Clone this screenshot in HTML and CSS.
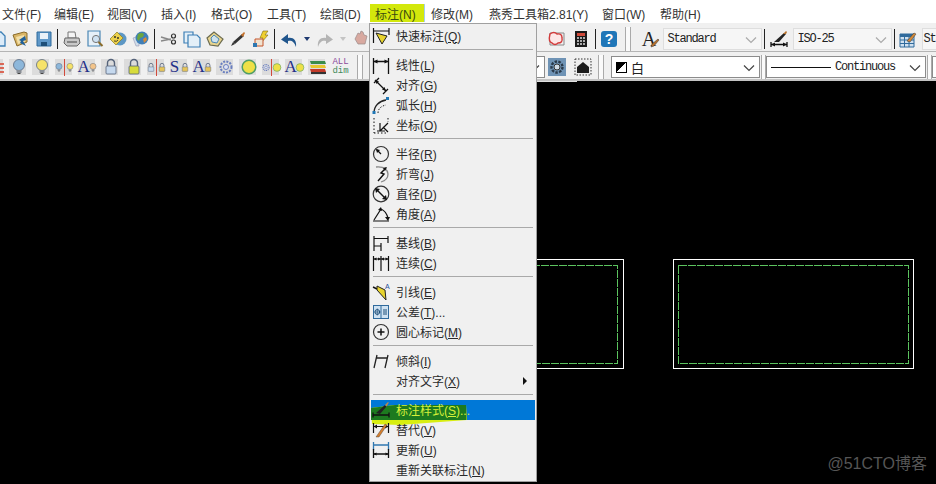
FILE: index.html
```html
<!DOCTYPE html>
<html lang="zh-CN">
<head>
<meta charset="utf-8">
<title>标注菜单</title>
<link rel="stylesheet" href="styles.css">
</head>
<body>
<svg class="defs" aria-hidden="true">
  <symbol id="chev" viewBox="0 0 12 8"><path d="M1 1.5 6 6.5 11 1.5" fill="none" stroke="currentColor" stroke-width="1.2"/></symbol>
  <symbol id="bulb" viewBox="0 0 18 18"><circle cx="9" cy="7" r="5.5" fill="currentColor" stroke="#5a6a80" stroke-width=".8"/><path d="M6.5 12h5v3h-5z" fill="#8a8f96"/><path d="M7.5 15.5h3" stroke="#444"/></symbol>
  <symbol id="lock" viewBox="0 0 18 18"><path d="M5.5 8V5a3.5 3.5 0 0 1 7 0v3" fill="none" stroke="#55637a" stroke-width="1.4"/><rect x="4" y="8" width="10" height="8" rx="1" fill="currentColor" stroke="#55637a" stroke-width=".8"/></symbol>
  <symbol id="gear" viewBox="0 0 18 18"><circle cx="9" cy="9" r="5.5" fill="none" stroke="#6a7fc0" stroke-width="2" stroke-dasharray="2 1.2"/><circle cx="9" cy="9" r="2.5" fill="#dfe3f3" stroke="#6a7fc0"/></symbol>
  <symbol id="dim" viewBox="0 0 20 20"><path d="M2.5 3v16M17.5 3v16M2.5 6.5h15" fill="none" stroke="#111" stroke-width="1.3"/><path d="M2.5 6.5l4-2v4zM17.5 6.5l-4-2v4z" fill="#111"/></symbol>
</svg>

<nav class="menubar">
  <span class="mitem first w52">文件(F)</span>
  <span class="mitem w53">编辑(E)</span>
  <span class="mitem w54">视图(V)</span>
  <span class="mitem w50">插入(I)</span>
  <span class="mitem w56">格式(O)</span>
  <span class="mitem w53">工具(T)</span>
  <span class="mitem w56">绘图(D)</span>
  <span class="mitem open">标注(N)</span>
  <span class="mitem w58">修改(M)</span>
  <span class="mitem w113">燕秀工具箱2.81(Y)</span>
  <span class="mitem w58">窗口(W)</span>
  <span class="mitem w58">帮助(H)</span>
</nav>

<div class="toolbar row1">
  <span class="tool"><svg class="ic" viewBox="0 0 18 18"><path d="M3 2h9l4 4v10H3z" fill="#dcebf8" stroke="#3d7fb5" stroke-width="1.3"/></svg></span>
  <span class="tool"><svg class="ic" viewBox="0 0 18 18"><path d="M1 5l11-3 3 1v9L5 16z" fill="#d9b566" stroke="#8a6b2a"/><path d="M4 7l8-2 1 7-7 2z" fill="#f2dfa8"/><path d="M13 6 7 10l2 1-1 2 6 3-3-5 3-1z" fill="#1f5f99"/></svg></span>
  <span class="tool"><svg class="ic" viewBox="0 0 18 18"><path d="M2 2h14v14H2z" fill="#5f98c9" stroke="#2f6a9c"/><path d="M5 3h8v6H5z" fill="#e9f1f8"/><path d="M6 12h6v4H6z" fill="#1f4f78"/></svg></span>
  <span class="sep"></span>
  <span class="tool"><svg class="ic" viewBox="0 0 18 18"><path d="M5 2h7l1 6H5z" fill="#f5f5f5" stroke="#777"/><path d="M2 8h14l1 5-3 3H4l-3-3z" fill="#c8c8c8" stroke="#666"/><path d="M4 12h10" stroke="#444"/></svg></span>
  <span class="tool"><svg class="ic" viewBox="0 0 18 18"><path d="M2 1h12v15H2z" fill="#e6f0f8" stroke="#4b87b5" stroke-width="1.2"/><circle cx="10" cy="9" r="3.6" fill="#cfe2f2" stroke="#777"/><path d="M12.5 12l4 4" stroke="#8a6b2a" stroke-width="2"/></svg></span>
  <span class="tool"><svg class="ic" viewBox="0 0 18 18"><circle cx="11" cy="9" r="6.5" fill="#5d97c4"/><path d="M1 9l7-7 6 6-7 7z" fill="#ecd049" stroke="#8a7a20" stroke-width=".7"/><circle cx="6" cy="7" r=".9" fill="#222"/><circle cx="9" cy="8" r=".9" fill="#222"/><path d="M5 11q3 1 4-1" fill="none" stroke="#222" stroke-width=".8"/></svg></span>
  <span class="tool"><svg class="ic" viewBox="0 0 18 18"><path d="M1 8l6-2v10l-3 0z" fill="#cfdde9" stroke="#88a"  stroke-width=".5"/><circle cx="10" cy="8" r="6.5" fill="#3f7fb8"/><path d="M6 4q4-2 6 0l-1 3-3 1-1 3-2-2z" fill="#6ba53f"/><path d="M11 9l3-2 1 3-3 3z" fill="#d58a38"/></svg></span>
  <span class="sep"></span>
  <span class="tool"><svg class="ic" viewBox="0 0 18 18"><path d="M1 7l10 3M1 11l10-2" stroke="#888" stroke-width="1.4"/><circle cx="13.5" cy="6" r="2" fill="none" stroke="#333" stroke-width="1.2"/><circle cx="13.5" cy="12" r="2" fill="none" stroke="#333" stroke-width="1.2"/></svg></span>
  <span class="tool"><svg class="ic" viewBox="0 0 18 18"><path d="M1 2h9v11H1z" fill="#e3eff8" stroke="#3d7fb5" stroke-width="1.2"/><path d="M5 5h9l3 3v9H5z" fill="#e3eff8" stroke="#3d7fb5" stroke-width="1.2"/></svg></span>
  <span class="tool"><svg class="ic" viewBox="0 0 18 18"><path d="M1 8l7-6 9 7-5 7-8-1z" fill="#e8d48e" stroke="#6b6b50" stroke-width="1.2"/><path d="M5 8l3-3 5 4-2 4-5-1z" fill="#cfe3ee" stroke="#4b87b5"/></svg></span>
  <span class="tool"><svg class="ic" viewBox="0 0 18 18"><path d="M2 16l2-4 2 2z" fill="#333"/><path d="M4 12 13 4l2 2-9 8z" fill="#333"/><path d="M12 5l3-3 1 1-2 4z" fill="#c5722d"/></svg></span>
  <span class="tool"><svg class="ic" viewBox="0 0 18 18"><path d="M11 1l-3 7h3l-2 5 7-8h-3l3-4z" fill="#efcf2f" stroke="#7c6a10" stroke-width=".6"/><path d="M3 9h8v7H3z" fill="#f0e2d0" stroke="#c4552a"/><path d="M1 13h4v4H1z" fill="#2e77b0"/></svg></span>
  <span class="sep"></span>
  <span class="tool wide"><svg class="ic" viewBox="0 0 18 18"><path d="M16 17c1-7-3-10-8-9V4L1 9.500 8 14v-3c3-1 6 0 8 6z" fill="#20558c"/></svg></span>
  <span class="drop"><svg class="tri" viewBox="0 0 6 4"><path d="M0 0h6L3 4z" fill="#1f3a70"/></svg></span>
  <span class="tool wide"><svg class="ic" viewBox="0 0 18 18"><path d="M2 17C1 10 5 7 10 8V4l7 5.500L10 14v-3C7 10 4 11 2 17z" fill="#b4b4b4"/></svg></span>
  <span class="drop"><svg class="tri" viewBox="0 0 6 4"><path d="M0 0h6L3 4z" fill="#c4c4c4"/></svg></span>
  <span class="tool"><svg class="ic" viewBox="0 0 18 18"><path d="M3 9l3-6 2 1 1-3 2 1 1 3 3 1-2 8H6z" fill="#d8a9a0" stroke="#9a8a88" stroke-width=".7"/></svg></span>
  <span class="gap-a"></span>
  <span class="tool cloud"><svg class="ic" viewBox="0 0 18 18"><path d="M3 3h14v12H3z" fill="none" stroke="#888"/><path d="M3 4q4-3 7 0 5-1 5 4 1 5-4 5-3 3-6 0-4-1-2-9z" fill="#fde6e6" stroke="#d23a3a" stroke-width="1.400"/></svg></span>
  <span class="tool wide"><svg class="ic" viewBox="0 0 18 18"><path d="M3 1h12v16H3z" fill="#1b1b1b"/><path d="M5 3h8v3H5z" fill="#cf4a3a"/><path d="M5 8h8M5 11h8M5 14h8" stroke="#ddd" stroke-width="1.500" stroke-dasharray="2 1"/></svg></span>
  <span class="sep"></span>
  <span class="tool"><span class="help">?</span></span>
  <span class="grip"></span>
  <span class="tool"><span class="pen-a">A</span><svg class="pen" viewBox="0 0 10 10"><path d="M1 9l1-3 6-5 1 1-5 6z" fill="#b5702c" stroke="#333" stroke-width=".5"/></svg></span>
  <span class="combo soft c1"><span class="ctext">Standard</span><svg class="chev"><use href="#chev"/></svg></span>
  <span class="sep"></span>
  <span class="tool wide"><svg class="ic" viewBox="0 0 18 18"><path d="M1 12v5M17 12v5M1 14.500h16" stroke="#111" stroke-width="1.300"/><path d="M1 14.500l4-2v4zM17 14.500l-4-2v4z" fill="#111"/><path d="M4 12 14 3l2 1-7 8z" fill="#222"/><path d="M13 4l3-3 1 1-1 2z" fill="#b5702c"/></svg></span>
  <span class="combo soft c1"><span class="ctext">ISO-25</span><svg class="chev"><use href="#chev"/></svg></span>
  <span class="sep"></span>
  <span class="tool"><svg class="ic" viewBox="0 0 18 18"><path d="M1 4h14v13H1z" fill="#cfe0ef" stroke="#2f6a9c"/><path d="M1 4h14v3H1z" fill="#2f6a9c"/><path d="M1 10h14M1 13.500h14M5.500 7v10M10 7v10" stroke="#2f6a9c"/><path d="M8 11 15 3l2 1-6 8z" fill="#d58a38" stroke="#333" stroke-width=".5"/></svg></span>
  <span class="combo soft c6"><span class="ctext">St</span></span>
</div>

<div class="toolbar row2">
  <span class="tool tile"><svg class="ic" viewBox="0 0 18 18"><path d="M9 3v12M12 6h5M12 10h5M12 14h5" stroke="#d8402a" stroke-width="1.400"/></svg></span>
  <span class="tool tile"><svg class="ic blue"><use href="#bulb"/></svg></span>
  <span class="tool tile"><svg class="ic yellow"><use href="#bulb"/></svg></span>
  <span class="tool tile"><svg class="half blue" viewBox="0 0 18 18"><use href="#bulb"/></svg><i class="redbar"></i><svg class="half yellow" viewBox="0 0 18 18"><use href="#bulb"/></svg></span>
  <span class="tool tile"><span class="big-a">A</span><svg class="half peach" viewBox="0 0 18 18"><use href="#bulb"/></svg></span>
  <span class="tool tile"><svg class="ic ltblue"><use href="#lock"/></svg></span>
  <span class="tool tile"><svg class="ic lime"><use href="#lock"/></svg></span>
  <span class="tool tile"><svg class="half ltblue" viewBox="0 0 18 18"><use href="#lock"/></svg><i class="redbar"></i><svg class="half gold" viewBox="0 0 18 18"><use href="#lock"/></svg></span>
  <span class="tool tile"><span class="big-a">S</span><svg class="half gold" viewBox="0 0 18 18"><use href="#lock"/></svg></span>
  <span class="tool tile"><span class="big-a">A</span><svg class="half gold" viewBox="0 0 18 18"><use href="#lock"/></svg></span>
  <span class="tool tile"><svg class="ic"><use href="#gear"/></svg></span>
  <span class="tool tile"><svg class="ic" viewBox="0 0 18 18"><circle cx="9" cy="9" r="6.800" fill="#eee046" stroke="#4f9e66" stroke-width="1.500"/></svg></span>
  <span class="tool tile"><svg class="half" viewBox="0 0 18 18"><use href="#gear"/></svg><i class="redbar"></i><svg class="half" viewBox="0 0 18 18"><circle cx="9" cy="9" r="7" fill="#eee046" stroke="#4f9e66"/></svg></span>
  <span class="tool tile"><span class="big-a">A</span><svg class="half" viewBox="0 0 18 18"><circle cx="9" cy="9" r="7" fill="#eee046" stroke="#4f9e66"/></svg></span>
  <span class="tool tile"><svg class="ic" viewBox="0 0 18 18"><path d="M1 3h15l1 3H2z" fill="#3b8c4a"/><path d="M1 7h15l1 3H2z" fill="#e8c72e"/><path d="M1 11h15l1 3H2z" fill="#c23a2a"/><path d="M2 14h15v2H2z" fill="#333"/></svg></span>
  <span class="tool tile plain"><span class="alldim"><b>ALL</b><em>dim</em></span></span>
  <span class="grip g2"></span>
  <span class="gap-b"></span>
  <span class="combo strong c2"><svg class="chev"><use href="#chev"/></svg></span>
  <span class="tool t-a"><svg class="ic" viewBox="0 0 18 18"><rect width="18" height="18" fill="#6f93b5"/><circle cx="9" cy="9" r="5.500" fill="none" stroke="#2a3a4a" stroke-width="2.400" stroke-dasharray="2.500 1.300"/><circle cx="9" cy="9" r="3" fill="#cfdbe6" stroke="#333"/></svg></span>
  <span class="tool t-b"><svg class="ic" viewBox="0 0 18 18"><rect x="1" y="1" width="16" height="16" fill="#eee" stroke="#333" stroke-dasharray="1.500 1.500"/><path d="M3 9l6-5 6 5v6H3z" fill="#1c1c1c"/></svg></span>
  <span class="grip g3"></span>
  <span class="combo strong c3"><i class="swatch"></i><span class="cjk">白</span><svg class="chev"><use href="#chev"/></svg></span>
  <span class="grip g4"></span>
  <span class="combo strong c4"><i class="ltline"></i><span class="ctext">Continuous</span><svg class="chev"><use href="#chev"/></svg></span>
  <span class="grip g4"></span>
  <span class="combo strong c5"></span>
</div>

<main class="canvas">
  <svg class="drawing" viewBox="0 81 936 403">
    <rect class="outer" x="373.500" y="259.500" width="250" height="109"/>
    <rect class="inner" x="378.500" y="265.500" width="239" height="98"/>
    <rect class="outer" x="673.500" y="259.500" width="240" height="109"/>
    <rect class="inner" x="678.500" y="265.500" width="230" height="98"/>
  </svg>
  <i class="topline"></i>
  <span class="watermark">@51CTO博客</span>
</main>

<div class="menu">
  <div class="row"><svg class="mi" viewBox="0 0 20 20"><path d="M2.500 2v15M18 2v7M2.500 5h15.500" fill="none" stroke="#111" stroke-width="1.200"/><path d="M5 7l11 3-5 8z" fill="#e8d42e" stroke="#222"/></svg><span>快速标注(<u>Q</u>)</span></div>
  <div class="divider"></div>
  <div class="row"><svg class="mi"><use href="#dim"/></svg><span>线性(<u>L</u>)</span></div>
  <div class="row"><svg class="mi" viewBox="0 0 20 20"><path d="M3 8l5-5M12 19l5-5M4 5l11 11" fill="none" stroke="#111" stroke-width="1.300"/><path d="M4 5l4 1.500L5.500 9zM15 16l-4-1.500 2.500-2.500z" fill="#111"/></svg><span>对齐(<u>G</u>)</span></div>
  <div class="row"><svg class="mi" viewBox="0 0 20 20"><path d="M3 18c0-7 5-12 12-13" fill="none" stroke="#222" stroke-width="1.300"/><path d="M7 18c0-4 3-7 8-8" fill="none" stroke="#222" stroke-dasharray="1.500 1.500"/><rect x="15" y="2" width="3" height="3" fill="#1f77b5"/><rect x="1.500" y="16" width="3" height="3" fill="#1f77b5"/></svg><span>弧长(<u>H</u>)</span></div>
  <div class="row"><svg class="mi" viewBox="0 0 20 20"><path d="M3 3v15M17 3v4M3 18h14" fill="none" stroke="#111" stroke-dasharray="1.500 2"/><path d="M9 8v8M9 16l8-8M6 16h8M12 12l5 5" fill="none" stroke="#111" stroke-width="1.200"/></svg><span>坐标(<u>O</u>)</span></div>
  <div class="divider"></div>
  <div class="row"><svg class="mi" viewBox="0 0 20 20"><circle cx="10" cy="10" r="7.500" fill="none" stroke="#333" stroke-width="1.200"/><path d="M10 10 5.500 5.500" stroke="#111" stroke-width="1.300"/><path d="M5 5l4 1-3 3z" fill="#111"/></svg><span>半径(<u>R</u>)</span></div>
  <div class="row"><svg class="mi" viewBox="0 0 20 20"><path d="M5 3q11-1 12 7 0 6-7 8" fill="none" stroke="#888" stroke-width="1.300"/><path d="M15 4l-5 5 3 1-6 7" fill="none" stroke="#111" stroke-width="1.400"/><path d="M16 3l-4 1 2 3z" fill="#111"/></svg><span>折弯(<u>J</u>)</span></div>
  <div class="row"><svg class="mi" viewBox="0 0 20 20"><circle cx="10" cy="10" r="7.800" fill="none" stroke="#333" stroke-width="1.200"/><path d="M5 5l10 10" stroke="#111" stroke-width="1.400"/><path d="M4 4l5 1-4 4zM16 16l-5-1 4-4z" fill="#111"/></svg><span>直径(<u>D</u>)</span></div>
  <div class="row"><svg class="mi" viewBox="0 0 20 20"><path d="M2 17h16M3 16 10 5q5 2 7 9" fill="none" stroke="#111" stroke-width="1.200"/><path d="M17 17l-3-4h5z" fill="#111"/><path d="M10 3l-3 3 4 1z" fill="#111"/></svg><span>角度(<u>A</u>)</span></div>
  <div class="divider"></div>
  <div class="row"><svg class="mi" viewBox="0 0 20 20"><path d="M3 3v15M10 10v8M17 3v7M3 5.500h14M3 13h7" fill="none" stroke="#111" stroke-width="1.200"/></svg><span>基线(<u>B</u>)</span></div>
  <div class="row"><svg class="mi" viewBox="0 0 20 20"><path d="M2.500 3v15M10 3v15M17.500 3v15M2.500 6h15" fill="none" stroke="#111" stroke-width="1.200"/><path d="M2.500 6l3-1.500v3zM10 6l-3-1.500v3zM10 6l3-1.500v3zM17.500 6l-3-1.500v3z" fill="#111"/></svg><span>连续(<u>C</u>)</span></div>
  <div class="divider"></div>
  <div class="row"><svg class="mi" viewBox="0 0 20 20"><path d="M2 5l4 2" stroke="#111" stroke-width="1.500"/><path d="M6 4l8 4 1 10-9-10z" fill="#e8d42e" stroke="#222"/><text class="mini-a" x="14" y="7">A</text></svg><span>引线(<u>E</u>)</span></div>
  <div class="row"><svg class="mi" viewBox="0 0 20 20"><rect x="2.500" y="3.500" width="15" height="13" fill="#cfe2f2" stroke="#2f6a9c"/><path d="M10 3.500v13" stroke="#2f6a9c"/><circle cx="6.300" cy="10" r="2.400" fill="none" stroke="#1c4e78"/><path d="M6.300 6.500v7M3.500 10h6" stroke="#1c4e78" stroke-width=".7"/><path d="M13 7v6M15 7v6" stroke="#1c4e78"/></svg><span>公差(<u>T</u>)...</span></div>
  <div class="row"><svg class="mi" viewBox="0 0 20 20"><circle cx="10" cy="10" r="7.500" fill="none" stroke="#333" stroke-width="1.200"/><path d="M10 6.500v7M6.500 10h7" stroke="#111" stroke-width="1.500"/></svg><span>圆心标记(<u>M</u>)</span></div>
  <div class="divider"></div>
  <div class="row"><svg class="mi" viewBox="0 0 20 20"><path d="M6 4 3 17M17 4l-3 13M5 7h11" fill="none" stroke="#222" stroke-width="1.300"/></svg><span>倾斜(<u>I</u>)</span></div>
  <div class="row"><span class="mi-blank"></span><span>对齐文字(<u>X</u>)</span><i class="arrow"></i></div>
  <div class="divider"></div>
  <div class="row current">
    <svg class="marker" viewBox="0 0 164 25"><path d="M0 6 24 3h71l1 15-27 2-40 3-28-1z" fill="#d8ee10"/><path d="M0 6 24 3h71l.5 15H0z" fill="#1d7a1f"/></svg>
    <svg class="mi over" viewBox="0 0 20 20"><path d="M2 15h16M2 12.500v5M18 12.500v5" stroke="#111" stroke-width="1.300"/><path d="M5 13 14 5l1.500 1.500L9 14z" fill="#222"/><path d="M14 5l3-3 .8.800-2.300 3.700z" fill="#c08a4a"/></svg>
    <span class="over">标注样式(<u>S</u>)...</span>
  </div>
  <div class="row"><svg class="mi" viewBox="0 0 20 20"><path d="M2.500 3v10M17.500 3v10M2.500 6.500h15" fill="none" stroke="#111" stroke-width="1.200"/><path d="M2.500 6.500l3.500-2v4zM17.500 6.500l-3.500-2v4z" fill="#111"/><path d="M5 17 14 4l2 1-8 12z" fill="#d7802e" stroke="#333" stroke-width=".4"/></svg><span>替代(<u>V</u>)</span></div>
  <div class="row"><svg class="mi" viewBox="0 0 20 20"><path d="M2.500 2v8M17.500 2v8M2.500 5h15" fill="none" stroke="#2f77b0" stroke-width="1.300"/><path d="M2.500 9v9M17.500 9v9M2.500 14h15" fill="none" stroke="#111" stroke-width="1.300"/><path d="M2.500 14l3-1.500v3zM17.500 14l-3-1.500v3z" fill="#111"/></svg><span>更新(<u>U</u>)</span></div>
  <div class="row"><span class="mi-blank"></span><span>重新关联标注(<u>N</u>)</span></div>
</div>
</body>
</html>
```
FILE: styles.css
```css
* { box-sizing: border-box; }
html, body { margin: 0; height: 100%; }
body {
  width: 936px; height: 484px; overflow: hidden; position: relative;
  display: flex; flex-direction: column; background: #000;
  font: 12px "Liberation Sans", "Noto Sans CJK SC", sans-serif; color: #333;
}
.defs { position: absolute; width: 0; height: 0; }

/* menu bar */
.menubar { flex: none; height: 23px; padding-top: 4px; background: #fff; display: flex; white-space: nowrap; }
.mitem { flex: none; height: 18px; padding-left: 6px; display: flex; align-items: center; }
.mitem.first { margin-left: -4px; }
.w50 { width: 50px; }
.w52 { width: 52px; }
.w53 { width: 53px; }
.w54 { width: 54px; }
.w56 { width: 56px; }
.w58 { width: 58px; }
.w113 { width: 113px; }
.mitem.open { width: 55px; padding-left: 5px; background: #d3e80c; border-right: 1px solid #a5cdf0; color: #3a4a10; }

/* toolbars */
.toolbar { flex: none; display: flex; align-items: center; background: #f0f0f0; white-space: nowrap; overflow: hidden; }
.row1 { height: 29px; padding-top: 4px; border-bottom: 1px solid #b4b4b4; }
.row2 { height: 29px; padding-top: 3px; border-bottom: 2px solid #c4c4c4; }
.tool { flex: none; width: 23px; height: 24px; display: flex; align-items: center; justify-content: center; position: relative; }
.row1 .tool:first-child { margin-left: -14px; }
.row2 .tool:first-child { margin-left: -16px; }
.tool.wide { width: 24px; }
.tool.cloud { width: 26px; }
.ic { width: 18px; height: 18px; display: block; }
.sep { flex: none; width: 1px; height: 20px; margin: 0 2px; background: #222; }
.drop { flex: none; width: 12px; display: flex; justify-content: center; }
.tri { width: 6px; height: 4px; }
.gap-a { flex: none; width: 170.500px; }
.gap-b { flex: none; width: 170px; }
.grip { flex: none; width: 6px; height: 24px; margin: 0 7px 0 4px; border-left: 1px solid #aaa; border-right: 1px solid #aaa; background: #fafafa; }
.g2 { margin: 0 0 0 5px; }
.g3 { margin: 0 7px 0 4px; }
.g4 { margin: 0 0 0 1px; width: 5px; }

.tile::before { content: ""; position: absolute; left: 2px; right: 4px; top: 4px; bottom: 4px; background: #dcdcdc; }
.tile.plain::before { display: none; }
.tile > * { position: relative; }
.half { width: 10px; height: 15px; display: block; }
.blue { color: #8db7da; }
.yellow { color: #f6e26a; }
.peach { color: #f3c48a; }
.ltblue { color: #c6d9ee; }
.lime { color: #d7dc3c; }
.gold { color: #e6c45a; }
.redbar { width: 1px; height: 17px; background: #d24a3c; flex: none; }
.big-a { font: 17px/18px "Liberation Serif", serif; color: #1f2f88; width: 10px; text-align: center; }
.alldim { display: flex; flex-direction: column; font: 9px/9px "Liberation Mono", monospace; text-align: center; }
.alldim b { font-weight: 400; color: #8a4a9a; }
.alldim em { font-style: normal; color: #3f8a5a; }

.help { width: 16px; height: 16px; border-radius: 3px; background: #1f76b8; color: #fff; font: 700 14px/16px "Liberation Sans", sans-serif; text-align: center; }
.pen-a { font: 20px/20px "Liberation Serif", serif; color: #222; }
.pen { position: absolute; right: 1px; bottom: 3px; width: 10px; height: 10px; }

.combo { flex: none; height: 22px; display: flex; align-items: center; padding: 0 4px; background: #fff; position: relative; }
.soft { background: #f6f6f6; border: 1px solid #dedede; }
.strong { border: 1px solid #8c8c8c; height: 22px; }
.ctext { font: 12px "Liberation Mono", monospace; letter-spacing: -1.200px; color: #222; }
.chev { width: 12px; height: 8px; position: absolute; right: 4px; top: 7px; color: #444; }
.soft .chev { color: #aaa; }
.c1 { width: 99px; margin-left: 2px; }
.c2 { width: 12px; border-left: 0; }
.c3 { width: 149px; }
.c4 { width: 160px; }
.c5 { width: 20px; }
.c6 { width: 14px; margin-left: 2px; border-right: 0; padding: 0 0 0 1px; }
.t-b { margin-left: 3px; }
.swatch { width: 11px; height: 11px; border: 1px solid #000; background: linear-gradient(45deg, #fff 50%, #000 50%); margin-right: 4px; transform: scaleX(-1); }
.cjk { font: 13px "Noto Sans CJK SC", sans-serif; color: #222; }
.ltline { width: 60px; height: 1px; background: #111; margin-right: 4px; }

/* canvas */
.canvas { flex: 1; position: relative; background: #000; }
.drawing { position: absolute; left: 0; top: 0; width: 936px; height: 403px; }
.outer { fill: none; stroke: #fff; stroke-width: 1; }
.inner { fill: none; stroke: #5cc45f; stroke-width: 1.300; stroke-dasharray: 8 1; shape-rendering: crispEdges; }
.topline { position: absolute; left: 537px; top: 0; width: 40px; height: 1px; background: #e0e0e0; }
.watermark { position: absolute; right: 9px; bottom: 10px; font: 16px "Liberation Sans", "Noto Sans CJK SC", sans-serif; color: #565656; }

/* dropdown */
.menu {
  position: absolute; left: 369px; top: 23px; width: 168px; height: 459px;
  background: #f0f0f0; border: 1px solid #a0a0a0; padding: 2px 1px;
  color: #2a2a2a;
}
.row { height: 20px; display: flex; align-items: center; gap: 5px; position: relative; }
.row > span { padding-bottom: 2px; }
.row u { text-decoration: underline; text-underline-offset: 1px; }
.mi { width: 20px; height: 20px; flex: none; display: block; }
.mi-blank { width: 20px; flex: none; }
.divider { height: 9px; padding-top: 3px; margin: 0 2px; }
.divider::before { content: ""; display: block; height: 1px; background: #a9a9a9; }
.arrow { position: absolute; right: 8px; top: 6px; border-left: 4px solid #111; border-top: 4px solid transparent; border-bottom: 4px solid transparent; }
.current { background: #0078d7; color: #d6f03a; }
.marker { position: absolute; left: 0; top: 2px; width: 164px; height: 25px; overflow: visible; }
.over { position: relative; }
.mini-a { font: 7px "Liberation Sans", sans-serif; fill: #1f4f9a; }
```
